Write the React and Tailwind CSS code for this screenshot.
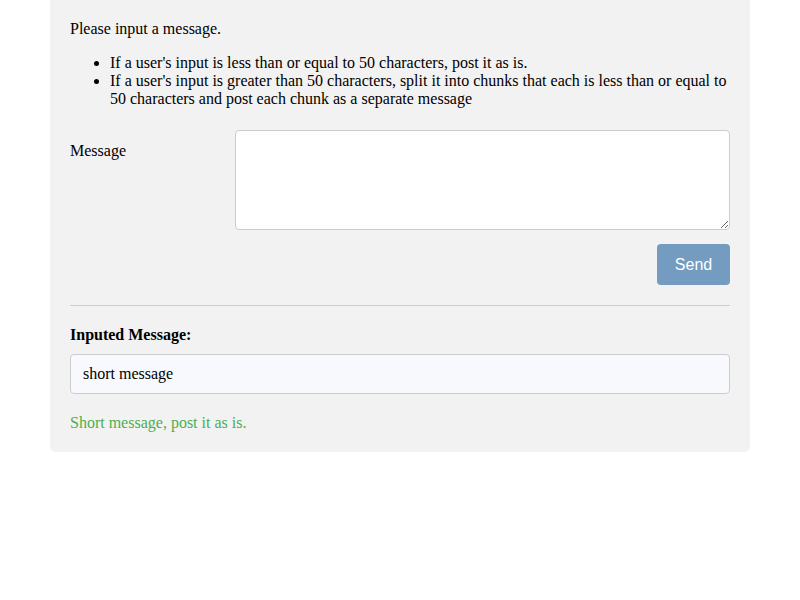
import React, { useState } from "react";

const LIMIT = 50;

const App = () => {
  const [message, setMessage] = useState("");
  const [inputed] = useState("short message");

  return (
    <div className="min-h-screen bg-white" style={{ fontFamily: '"Liberation Serif", "Times New Roman", serif' }}>
      <div className="mx-auto w-[700px] rounded-b-md bg-[#f2f2f2] p-5 text-base leading-[18px] text-black">
        <p>Please input a message.</p>

        <ul className="mt-4 list-disc pl-10">
          <li>If a user's input is less than or equal to {LIMIT} characters, post it as is.</li>
          <li>
            If a user's input is greater than {LIMIT} characters, split it into chunks that each is less than or equal
            to {LIMIT} characters and post each chunk as a separate message
          </li>
        </ul>

        <div className="mt-[22px] grid grid-cols-[165px_1fr]">
          <label htmlFor="message" className="pt-3">
            Message
          </label>
          <textarea
            id="message"
            value={message}
            onChange={(e) => setMessage(e.target.value)}
            className="h-[100px] w-full rounded border border-[#cccccc] bg-white p-2 outline-none"
          />
        </div>

        <div className="mt-[14px] flex justify-end">
          <button
            className="h-[41px] w-[73px] rounded bg-[#739cc0] text-base font-medium text-white"
            style={{ fontFamily: '"Liberation Sans", Arial, sans-serif' }}
          >
            Send
          </button>
        </div>

        <hr className="my-5 border-t border-[#cccccc]" />

        <h4 className="font-bold">Inputed Message:</h4>
        <div className="mt-[10px] flex h-10 items-center rounded border border-[#cccccc] bg-[#f8f9fd] px-3">
          {inputed}
        </div>

        <p className="mt-5 text-[#4caf50]">Short message, post it as is.</p>
      </div>
    </div>
  );
};

export default App;
